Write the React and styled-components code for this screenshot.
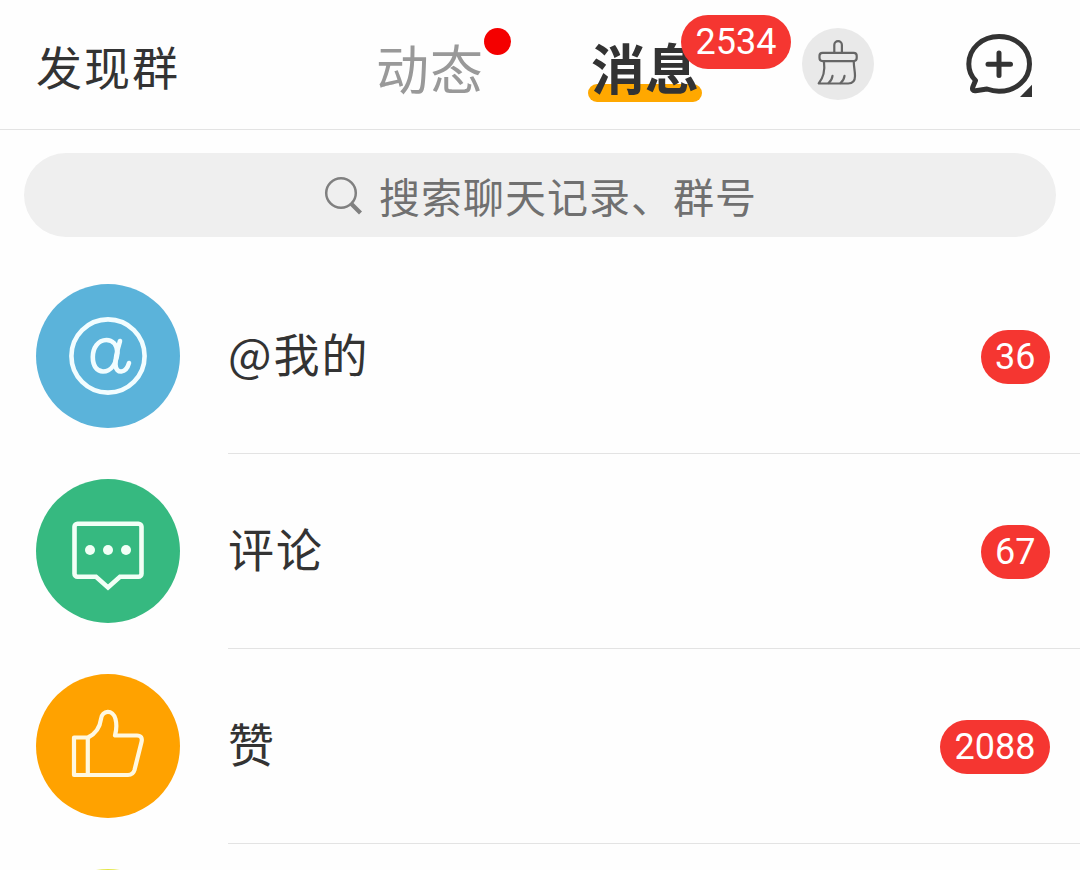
import React from 'react';
import styled, { createGlobalStyle } from 'styled-components';

const GlobalStyle = createGlobalStyle`
  *, *::before, *::after { box-sizing: border-box; }
  body { margin: 0; background: #fefefe; }
`;

const Page = styled.div`
  width: 1080px;
  height: 870px;
  overflow: hidden;
  background: #fefefe;
  color: #333;
  font-family: 'Noto Sans CJK SC', sans-serif;
`;

const Header = styled.header`
  display: flex;
  align-items: flex-start;
  height: 130px;
  padding-left: 36px;
  border-bottom: 1px solid #e3e3e3;
`;

const Discover = styled.div`
  width: 340px;
  padding-top: 30px;
  font-size: 46px;
  line-height: 70px;
  letter-spacing: 2px;
  white-space: nowrap;
`;

const Tab = styled.div`
  position: relative;
  z-index: 0;
  width: ${(p) => p.$width}px;
  padding-top: 27px;
  font-size: ${(p) => (p.$active ? 54 : 53)}px;
  line-height: 80px;
  font-weight: ${(p) => (p.$active ? 700 : 400)};
  letter-spacing: ${(p) => (p.$active ? 0 : 1)}px;
  color: ${(p) => (p.$active ? '#333' : '#999')};
  white-space: nowrap;
`;

const Underline = styled.span`
  position: absolute;
  z-index: -1;
  left: -3px;
  top: 84px;
  width: 114px;
  height: 18px;
  border-radius: 9px;
  background: #ffa800;
`;

const Dot = styled.span`
  position: absolute;
  left: 108px;
  top: 28px;
  width: 27px;
  height: 27px;
  border-radius: 50%;
  background: #f40000;
`;

const Badge = styled.span`
  display: block;
  height: 54px;
  padding: 0 14.5px;
  border-radius: 27px;
  background: #f53631;
  color: #fff;
  font: 400 36px/55px Roboto, sans-serif;
  letter-spacing: 0;
`;

const TabBadge = styled(Badge)`
  position: absolute;
  left: 90px;
  top: 15px;
`;

const CleanButton = styled.div`
  width: 72px;
  height: 72px;
  margin-top: 28px;
  border-radius: 50%;
  background: #e9e9e9;
`;

const AddButton = styled.div`
  margin: 28px 0 0 86px;
  width: 78px;
  height: 74px;
`;

const SearchBar = styled.div`
  display: flex;
  align-items: center;
  height: 84px;
  margin: 23px 24px 22px;
  padding-left: 296px;
  border-radius: 42px;
  background: #efefef;
  color: #707070;
  font-size: 41px;
  letter-spacing: 1px;
  white-space: nowrap;
`;

const SearchText = styled.span`
  margin-left: 15px;
  line-height: 60px;
`;

const Row = styled.div`
  display: flex;
  height: 195px;
  padding-left: 36px;
`;

const Avatar = styled.div`
  width: 144px;
  height: 144px;
  margin-top: 25px;
  border-radius: 50%;
  background: ${(p) => p.$color};
`;

const RowBody = styled.div`
  display: flex;
  flex: 1;
  justify-content: space-between;
  align-items: center;
  margin-left: 48px;
  padding-right: 30px;
  border-bottom: 1px solid #e3e3e3;
`;

const RowTitle = styled.span`
  padding-bottom: 8px;
  font-size: 46px;
  line-height: 70px;
  letter-spacing: 2px;
`;

const RowBadge = styled(Badge)`
  margin-top: 2px;
`;

const Svg = styled.svg`
  display: block;
  fill: none;
  stroke-linecap: round;
  stroke-linejoin: round;
`;

const BroomIcon = () => (
  <Svg width="72" height="72" viewBox="802 28 72 72" stroke="#666" strokeWidth="2.2">
    <path d="M834.3 52V45a3.8 3.8 0 0 1 7.6 0v7" />
    <rect x="819.5" y="52.8" width="37.2" height="8.3" rx="3" />
    <path d="M824 62c1.200 9-.5 15.500-5.300 21.500h29.500c4.500 0 6.800-3 6.800-7.500c0-5-1.200-9-1.200-14" />
    <path d="M828.500 83c2.500-2 3.700-4.200 4-7.200M840.500 83c2.500-2 3.700-4.200 4-7.200" />
  </Svg>
);

const AddIcon = () => (
  <Svg width="78" height="74" viewBox="960 28 78 74" stroke="#333" strokeWidth="5">
    <path d="M975.500 80.500C970.500 75.500 968.800 70 968.800 64C968.800 48.500 982 36.600 999 36.600S1029.500 48.500 1029.500 64S1016 91.300 999 91.300C995 91.300 991 90.500 987 89L975.500 90.700C972.800 91 972 89.500 972.800 87Z" />
    <path d="M999 53v22.500M988 64.200h22.500" />
    <path d="M1020 97L1032 84.800V97Z" fill="#333" stroke="none" />
  </Svg>
);

const SearchIcon = () => (
  <Svg width="44" height="44" viewBox="320 173 44 44" stroke="#808080">
    <circle cx="341" cy="193" r="14.800" strokeWidth="2.500" />
    <path d="M351.500 204L360.500 213" strokeWidth="4.300" strokeLinecap="butt" />
  </Svg>
);

const MentionIcon = () => (
  <Svg width="144" height="144" viewBox="36 284 144 144" stroke="#f2fdff" strokeWidth="4.600">
    <circle cx="108" cy="356" r="36.600" />
    <path d="M120 341C117 351 115 358 115.500 365C116 374 126 374 129 363" />
    <path d="M117.500 353C117 344 112 340 106.500 340C98 340 92.800 348 92.800 357C92.800 366 97 371.500 103 371.500C111 371.500 116 364 117.500 353Z" />
  </Svg>
);

const CommentIcon = () => (
  <Svg width="144" height="144" viewBox="36 479 144 144" stroke="#f2fff6" strokeWidth="4.600">
    <path d="M77.500 523.800h61a3 3 0 0 1 3 3v47a3 3 0 0 1-3 3H120L108 587.500L96 576.800H77.500a3 3 0 0 1-3-3v-47a3 3 0 0 1 3-3Z" strokeLinejoin="miter" />
    <g fill="#f2fff6" stroke="none">
      <circle cx="90" cy="550" r="5" />
      <circle cx="108" cy="550" r="5" />
      <circle cx="126" cy="550" r="5" />
    </g>
  </Svg>
);

const LikeIcon = () => (
  <Svg width="144" height="144" viewBox="36 674 144 144" stroke="#fff8e0" strokeWidth="4.200">
    <path d="M74 737.500H88C95 734 100 727 101 719C102 710 113 709 115.500 719C117 725 116.500 730 115 735.500H137C141 735.500 142.500 738 141.500 742L134.500 770C133.500 773.500 131.500 775 128 775H74Z" />
    <path d="M87.800 738V775" />
  </Svg>
);

const rows = [
  { title: '@我的', count: 36, color: '#5bb3da', Icon: MentionIcon },
  { title: '评论', count: 67, color: '#36b980', Icon: CommentIcon },
  { title: '赞', count: 2088, color: '#ffa200', Icon: LikeIcon },
];

export default function App() {
  return (
    <Page>
      <GlobalStyle />
      <Header>
        <Discover>发现群</Discover>
        <Tab $width={215}>
          动态
          <Dot />
        </Tab>
        <Tab $width={211} $active>
          <Underline />
          消息
          <TabBadge>2534</TabBadge>
        </Tab>
        <CleanButton><BroomIcon /></CleanButton>
        <AddButton><AddIcon /></AddButton>
      </Header>
      <SearchBar>
        <SearchIcon />
        <SearchText>搜索聊天记录、群号</SearchText>
      </SearchBar>
      {rows.map(({ title, count, color, Icon }) => (
        <Row key={title}>
          <Avatar $color={color}><Icon /></Avatar>
          <RowBody>
            <RowTitle>{title}</RowTitle>
            <RowBadge>{count}</RowBadge>
          </RowBody>
        </Row>
      ))}
      <Row>
        <Avatar $color="linear-gradient(90deg, #e3e647 58%, #77703f 62%)" />
      </Row>
    </Page>
  );
}
